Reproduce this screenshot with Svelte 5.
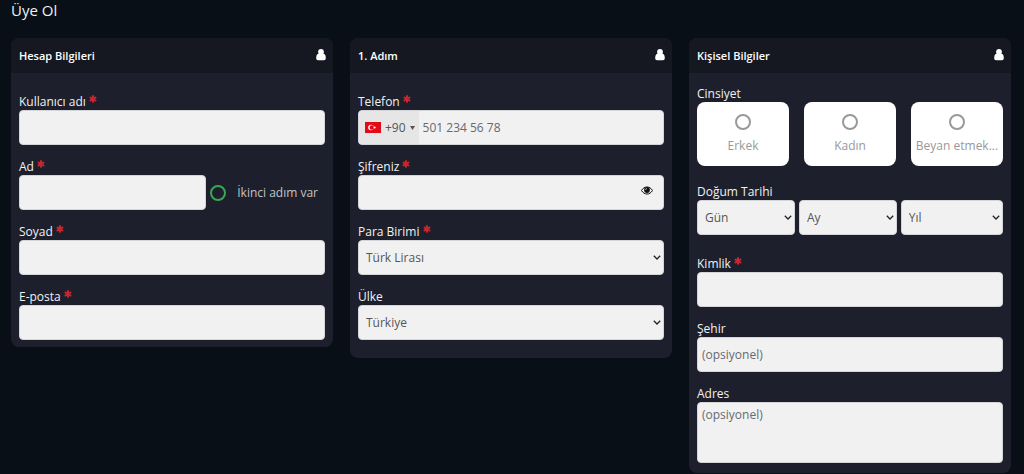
<script lang="ts">
	let username = $state('');
	let firstName = $state('');
	let hasSecondName = $state(false);
	let surname = $state('');
	let email = $state('');
	let phone = $state('');
	let password = $state('');
	let showPassword = $state(false);
	let gender = $state('');

	const genders = [
		{ value: 'male', label: 'Erkek' },
		{ value: 'female', label: 'Kadın' },
		{ value: 'none', label: 'Beyan etmek...' }
	];
	const days = Array.from({ length: 31 }, (_, i) => i + 1);
	const months = Array.from({ length: 12 }, (_, i) => i + 1);
	const years = Array.from({ length: 80 }, (_, i) => 2005 - i);
</script>

{#snippet required()}
	<svg class="required" viewBox="0 0 14 14" aria-hidden="true">
		<path d="M7 2v10M2.7 4.500l8.600 5M11.300 4.500L2.700 9.500" stroke="currentColor" stroke-width="3.600" stroke-linecap="round"/>
	</svg>
{/snippet}

{#snippet cardHeader(title: string)}
	<header class="card-header">
		<h2>{title}</h2>
		<svg class="user-icon" viewBox="0 0 10 12" fill="currentColor" aria-hidden="true">
			<circle cx="5" cy="3" r="2.9"/>
			<path d="M2.3 4.800C.7 5.200.2 7.200.2 9.100.2 10.500 1 11.300 2.200 11.300H7.800C9 11.300 9.800 10.500 9.800 9.100 9.800 7.200 9.300 5.200 7.700 4.800Z"/>
		</svg>
	</header>
{/snippet}

<main class="signup">
	<h1>Üye Ol</h1>
	<form class="cards">
		<section class="card">
			{@render cardHeader('Hesap Bilgileri')}
			<div class="card-body">
				<div class="field">
					<label for="username">Kullanıcı adı {@render required()}</label>
					<input class="control" id="username" type="text" bind:value={username} />
				</div>
				<div class="field">
					<label for="first-name">Ad {@render required()}</label>
					<div class="name-row">
						<input class="control" id="first-name" type="text" bind:value={firstName} />
						<label class="second-name">
							<input type="checkbox" bind:checked={hasSecondName} />
							<span>İkinci adım var</span>
						</label>
					</div>
				</div>
				<div class="field">
					<label for="surname">Soyad {@render required()}</label>
					<input class="control" id="surname" type="text" bind:value={surname} />
				</div>
				<div class="field">
					<label for="email">E-posta {@render required()}</label>
					<input class="control" id="email" type="email" bind:value={email} />
				</div>
			</div>
		</section>

		<section class="card">
			{@render cardHeader('1. Adım')}
			<div class="card-body step">
				<div class="field">
					<label for="phone">Telefon {@render required()}</label>
					<div class="control phone">
						<button type="button" class="country" aria-label="Türkiye +90">
							<svg class="flag" viewBox="0 0 16 11" aria-hidden="true">
								<rect width="16" height="11" fill="#e30a17"/>
								<circle cx="6" cy="5.500" r="2.800" fill="#fff"/>
								<circle cx="6.800" cy="5.500" r="2.200" fill="#e30a17"/>
								<path d="M8 5.500L9.200 5.100V3.900L10 4.900L11.100 4.500L10.400 5.500L11.100 6.500L10 6.100L9.200 7.100V5.900Z" fill="#fff"/>
							</svg>
							<span>+90</span>
							<svg class="caret" viewBox="0 0 5 4" aria-hidden="true">
								<path d="M0 0H5L2.500 4Z" fill="#555"/>
							</svg>
						</button>
						<input id="phone" type="tel" placeholder="501 234 56 78" bind:value={phone} />
					</div>
				</div>
				<div class="field">
					<label for="password">Şifreniz {@render required()}</label>
					<div class="control password">
						<input id="password" type={showPassword ? 'text' : 'password'} bind:value={password} />
						<button type="button" aria-label="Şifreyi göster" onclick={() => (showPassword = !showPassword)}>
							<svg viewBox="0 0 12 9" aria-hidden="true">
								<path d="M.5 4.500C3.200-.2 8.800-.2 11.500 4.500 8.800 9.200 3.200 9.200.5 4.500Z" fill="none" stroke="#111" stroke-width="1"/>
								<circle cx="6" cy="4" r="2.900" fill="#111"/>
								<path d="M4.500 4A1.500 1.500 0 0 1 6 2.500" fill="none" stroke="#f1f1f1" stroke-width=".6"/>
							</svg>
						</button>
					</div>
				</div>
				<div class="field">
					<label for="currency">Para Birimi {@render required()}</label>
					<select class="control" id="currency">
						<option>Türk Lirası</option>
					</select>
				</div>
				<div class="field">
					<label for="country">Ülke</label>
					<select class="control" id="country">
						<option>Türkiye</option>
					</select>
				</div>
			</div>
		</section>

		<section class="card">
			{@render cardHeader('Kişisel Bilgiler')}
			<div class="card-body personal">
				<fieldset class="field gender">
					<legend>Cinsiyet</legend>
					<div class="gender-row">
						{#each genders as item}
							<label class="gender-option">
								<input type="radio" name="gender" value={item.value} bind:group={gender} />
								<span>{item.label}</span>
							</label>
						{/each}
					</div>
				</fieldset>
				<fieldset class="field birth">
					<legend>Doğum Tarihi</legend>
					<div class="birth-row">
						<select class="control" aria-label="Gün">
							<option>Gün</option>
							{#each days as day}<option>{day}</option>{/each}
						</select>
						<select class="control" aria-label="Ay">
							<option>Ay</option>
							{#each months as month}<option>{month}</option>{/each}
						</select>
						<select class="control" aria-label="Yıl">
							<option>Yıl</option>
							{#each years as year}<option>{year}</option>{/each}
						</select>
					</div>
				</fieldset>
				<div class="field">
					<label for="identity">Kimlik {@render required()}</label>
					<input class="control" id="identity" type="text" />
				</div>
				<div class="field">
					<label for="city">Şehir</label>
					<input class="control" id="city" type="text" placeholder="(opsiyonel)" />
				</div>
				<div class="field">
					<label for="address">Adres</label>
					<textarea class="control" id="address" placeholder="(opsiyonel)"></textarea>
				</div>
			</div>
		</section>
	</form>
</main>

<style>
	:global(body) {
		background: #080f16;
	}

	.signup {
		padding: 0 13px 0 11px;
		color: #f1f1f1;
		font-family: 'Open Sans', sans-serif;
		font-size: 12px;
		line-height: 17px;
	}

	h1 {
		margin: 0 0 18px;
		font-size: 15px;
		font-weight: 400;
		line-height: 20px;
	}

	.cards {
		display: grid;
		grid-template-columns: repeat(3, minmax(0, 1fr));
		align-items: start;
		gap: 17px;
	}

	.card {
		background: #1d202c;
		border-radius: 8px;
		overflow: hidden;
	}

	.card-header {
		display: flex;
		align-items: center;
		justify-content: space-between;
		height: 35px;
		padding: 0 7px 0 8px;
		background: #151820;
	}

	h2 {
		margin: 0;
		color: #fff;
		font-size: 11px;
		font-weight: 600;
	}

	.user-icon {
		width: 10px;
		height: 12px;
		margin-bottom: 2px;
		color: #fff;
	}

	.card-body {
		display: flex;
		flex-direction: column;
		gap: 13px;
		padding: 20px 8px 7px;
	}

	.card-body.step {
		padding-bottom: 18px;
	}

	.card-body.personal {
		padding-top: 12px;
		padding-bottom: 10px;
	}

	.field {
		display: flex;
		flex-direction: column;
		min-width: 0;
		margin: 0;
		padding: 0;
		border: 0;
	}

	fieldset.field {
		display: block;
	}

	.gender {
		margin-bottom: 4px;
	}

	.birth {
		margin-bottom: 7px;
	}

	legend {
		padding: 0;
	}

	.required {
		width: 8px;
		height: 8px;
		color: #c9252d;
		vertical-align: 3px;
	}

	.control {
		box-sizing: border-box;
		width: 100%;
		height: 35px;
		padding: 0 4px;
		border: 1px solid #d5d5d8;
		border-radius: 4px;
		background: #f1f1f1;
		color: #555;
	}

	input,
	select,
	textarea,
	button {
		margin: 0;
		font: inherit;
	}

	select.control {
		appearance: none;
		padding: 0 16px 0 7px;
		background: #f1f1f1 url("data:image/svg+xml,%3Csvg xmlns='http://www.w3.org/2000/svg' viewBox='0 0 8 5'%3E%3Cpath d='M.8.8L4 4 7.200.8' fill='none' stroke='%23222' stroke-width='1.300'/%3E%3C/svg%3E") no-repeat right 2px center / 8px 5px;
	}

	textarea.control {
		display: block;
		height: 61px;
		padding: 3px 4px;
		resize: none;
	}

	::placeholder {
		color: #666a70;
		opacity: 1;
	}

	.name-row {
		display: flex;
		align-items: center;
		gap: 4px;
	}

	.name-row .control {
		flex: 1;
		min-width: 0;
	}

	.second-name {
		display: flex;
		align-items: center;
		gap: 11px;
		padding-right: 7px;
		color: #c3c4c8;
		white-space: nowrap;
	}

	.second-name input,
	.gender-option input {
		appearance: none;
		box-sizing: border-box;
		width: 16px;
		height: 16px;
		border: 2px solid #999;
		border-radius: 50%;
	}

	.second-name input {
		border-color: #3aa655;
	}

	.second-name input:checked {
		background: #3aa655;
	}

	.gender-option input:checked {
		background: #999;
	}

	.phone {
		display: flex;
		padding: 0;
		overflow: hidden;
	}

	.phone input,
	.password input {
		flex: 1;
		min-width: 0;
		padding: 0 4px;
		border: 0;
		background: none;
		color: inherit;
	}

	.country {
		display: flex;
		align-items: center;
		gap: 4px;
		padding: 0 4px 0 6px;
		border: 0;
		background: #e6e6e6;
		color: #555;
	}

	.flag {
		width: 16px;
		height: 11px;
	}

	.caret {
		width: 5px;
		height: 4px;
	}

	.password {
		display: flex;
		padding: 0;
	}

	.password button {
		padding: 0 10px 4px 0;
		border: 0;
		background: none;
		line-height: 0;
	}

	.password svg {
		width: 12px;
		height: 9px;
	}

	.gender-row {
		display: grid;
		grid-template-columns: repeat(3, minmax(0, 1fr));
		gap: 15px;
	}

	.gender-option {
		display: flex;
		flex-direction: column;
		align-items: center;
		gap: 7px;
		box-sizing: border-box;
		height: 64px;
		padding: 12px 2px 0;
		border-radius: 8px;
		background: #fff;
		color: #999;
	}

	.gender-option span {
		white-space: nowrap;
	}

	.birth-row {
		display: grid;
		grid-template-columns: 32% 32% 1fr;
		gap: 4px;
	}

	@media (max-width: 700px) {
		.cards {
			grid-template-columns: 1fr;
		}
	}
</style>
